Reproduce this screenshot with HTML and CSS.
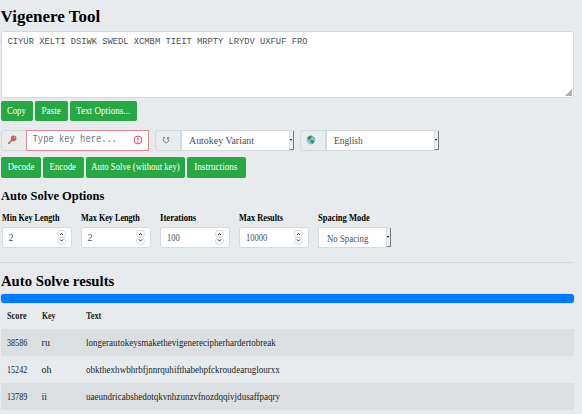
FILE: index.html
```html
<!DOCTYPE html>
<html lang="en">
<head>
<meta charset="utf-8">
<title>Vigenere Tool</title>
<link rel="stylesheet" href="styles.css">
</head>
<body>
<main class="page">
  <h1 class="title">Vigenere Tool</h1>
  <div class="cipher">CIYUR XELTI DSIWK SWEDL XCMBM TIEIT MRPTY LRYDV UXFUF FRO
    <svg class="grip" viewBox="0 0 7 7"><path d="M7 0V7H0Z" fill="#b9b9b9"/><path d="M1 7L7 1M4 7L7 4" stroke="#8e8e8e" stroke-width=".6"/></svg>
  </div>
  <div class="buttons text-buttons">
    <button class="btn w-copy"><span class="fit t-copy">Copy</span></button>
    <button class="btn w-paste"><span class="fit t-paste">Paste</span></button>
    <button class="btn w-options"><span class="fit t-options">Text Options...</span></button>
  </div>
  <div class="settings">
    <div class="group key-group">
      <span class="addon"><svg class="icon" viewBox="0 0 10 10"><path d="M5.2 4.8L1.3 8.7" stroke="#b55b45" stroke-width="1.5"/><path d="M2.2 7.8L3.3 8.9" stroke="#b55b45" stroke-width="1"/><circle cx="6.6" cy="3.4" r="2.8" fill="#c1694f"/><circle cx="7.6" cy="2.4" r=".6" fill="#e8d0c9"/></svg></span>
      <span class="key-input"><span class="placeholder">Type key here...</span><svg class="alert" viewBox="0 0 10 10"><circle cx="5" cy="5" r="3.9" fill="none" stroke="#dc3545" stroke-width=".9"/><path d="M5 2.5V5.5M5 6.4V7.5" stroke="#dc3545" stroke-width="1.1"/></svg></span>
    </div>
    <div class="group">
      <span class="addon"><svg class="icon" viewBox="0 0 10 10"><path d="M3.6 2.7A2.7 2.7 0 1 0 6.7 2.8" fill="none" stroke="#68717a" stroke-width=".85"/><path d="M2 2.5H3.9M6.5 4.6V2.5H8.5" fill="none" stroke="#68717a" stroke-width=".75"/></svg></span>
      <span class="select"><span class="fit t-autokey">Autokey Variant</span><i class="arrow"></i></span>
    </div>
    <div class="group">
      <span class="addon"><svg class="icon" viewBox="0 0 10 10"><circle cx="5" cy="5" r="4.4" fill="#82c5f4"/><path d="M1.2 2.8Q3 .3 5.7.7L6.2 1.8 5 2.5 5.5 3.4 4 4.2 3.2 5 2 4.2ZM4.5 5L7.5 5.2 8.2 6.6 6.4 9 5.5 8.5 5.3 6.9 4.2 6.2ZM7.2 1.5L9 3.6 7.7 3.4Z" fill="#498b36"/></svg></span>
      <span class="select"><span class="fit t-english">English</span><i class="arrow"></i></span>
    </div>
  </div>
  <div class="buttons action-buttons">
    <button class="btn w-decode"><span class="fit t-decode">Decode</span></button>
    <button class="btn w-encode"><span class="fit t-encode">Encode</span></button>
    <button class="btn w-auto"><span class="fit t-auto">Auto Solve (without key)</span></button>
    <button class="btn w-instructions"><span class="fit t-instructions">Instructions</span></button>
  </div>
  <h2 class="subtitle"><span class="fit t-solve">Auto Solve Options</span></h2>
  <div class="options">
    <label class="field"><b class="fit t-min">Min Key Length</b><span class="number"><span>2</span><svg class="spin" viewBox="0 0 9 15"><rect x=".5" y=".5" width="8" height="7" rx="3.4"/><rect x=".5" y="7.5" width="8" height="7" rx="3.4"/><path d="M3 5L4.5 3.5 6 5M3 9.5L4.5 11 6 9.5"/></svg></span></label>
    <label class="field"><b class="fit t-max">Max Key Length</b><span class="number"><span>2</span><svg class="spin" viewBox="0 0 9 15"><rect x=".5" y=".5" width="8" height="7" rx="3.4"/><rect x=".5" y="7.5" width="8" height="7" rx="3.4"/><path d="M3 5L4.5 3.5 6 5M3 9.5L4.5 11 6 9.5"/></svg></span></label>
    <label class="field"><b class="fit t-iterations">Iterations</b><span class="number"><span class="fit t-value">100</span><svg class="spin" viewBox="0 0 9 15"><rect x=".5" y=".5" width="8" height="7" rx="3.4"/><rect x=".5" y="7.5" width="8" height="7" rx="3.4"/><path d="M3 5L4.5 3.5 6 5M3 9.5L4.5 11 6 9.5"/></svg></span></label>
    <label class="field"><b class="fit t-results">Max Results</b><span class="number"><span class="fit t-value">10000</span><svg class="spin" viewBox="0 0 9 15"><rect x=".5" y=".5" width="8" height="7" rx="3.4"/><rect x=".5" y="7.5" width="8" height="7" rx="3.4"/><path d="M3 5L4.5 3.5 6 5M3 9.5L4.5 11 6 9.5"/></svg></span></label>
    <label class="field"><b class="fit t-mode">Spacing Mode</b><span class="select spacing"><span class="fit t-nospacing">No Spacing</span><i class="arrow"></i></span></label>
  </div>
  <hr class="rule">
  <h2 class="results-title"><span class="fit t-found">Auto Solve results</span></h2>
  <div class="progress"></div>
  <div class="table">
    <div class="row head"><span class="fit t-head">Score</span><span class="fit t-keyhead">Key</span><span class="fit t-head">Text</span></div>
    <div class="row odd"><span class="fit t-score">38586</span><span>ru</span><span class="fit t-row">longerautokeysmakethevigenerecipherhardertobreak</span></div>
    <div class="row"><span class="fit t-score">15242</span><span>oh</span><span class="fit t-row">obkthexhwbhrbfjnnrquhifthabehpfckroudearuglourxx</span></div>
    <div class="row odd"><span class="fit t-score">13789</span><span>ii</span><span class="fit t-row">uaeundricabshedotqkvnhzunzvfnozdqqivjdusaffpaqry</span></div>
  </div>
</main>
</body>
</html>
```
FILE: styles.css
```css
* { box-sizing: border-box; }
html, body { margin: 0; height: 414px; overflow: hidden; }
body { background: #e7ebee; color: #212529; font: 10px/12px "Liberation Serif", serif; }
.page { width: 573px; margin-left: .6px; }
h1, h2 { margin: 0; color: #000; font-weight: bold; white-space: nowrap; }
.title { height: 30.5px; padding-top: 6px; font-size: 17px; line-height: 21px; }
.cipher { position: relative; height: 67.5px; padding: 4px 6px; background: #fff; border: 1px solid #d5dade; border-radius: 3px; color: #495057; font: 8.77px/12px "Liberation Mono", monospace; white-space: nowrap; }
.grip { position: absolute; right: 1px; bottom: 1px; width: 7px; height: 7px; }
.buttons { display: flex; gap: 2px; height: 21px; }
.text-buttons { margin-top: 2.5px; }
.action-buttons { margin-top: 6.5px; }
.btn { display: flex; justify-content: center; flex: none; height: 20.6px; padding: 0; border: 0; border-radius: 2px; background: #28a745; color: #fff; font: 10.5px/20px "Liberation Serif", serif; white-space: nowrap; }
.w-copy { width: 32px; } .w-paste { width: 33px; } .w-options { width: 67px; }
.w-decode { width: 40px; } .w-encode { width: 41px; } .w-auto { width: 99px; } .w-instructions { width: 59px; }

/* Condensed text, scaled from its leading edge */
.fit { display: inline-block; flex: none; transform-origin: left center; }
.btn .fit { transform-origin: center; }
.t-copy { transform: scaleX(.83); }
.t-paste { transform: scaleX(.87); }
.t-options { transform: scaleX(.87); }
.t-decode { transform: scaleX(.83); }
.t-encode { transform: scaleX(.84); }
.t-auto { transform: scaleX(.825); }
.t-instructions { transform: scaleX(.87); }
.t-autokey { transform: scaleX(.9); }
.t-english { transform: scaleX(.85); }
.t-solve { transform: scaleX(.925); }
.t-min, .t-max { transform: scaleX(.815); }
.t-iterations { transform: scaleX(.87); }
.t-results { transform: scaleX(.83); }
.t-mode { transform: scaleX(.85); }
.t-nospacing { transform: scaleX(.8); }
.t-value { transform: scaleX(.85); }
.t-found { transform: scaleX(.98); }
.t-head { transform: scaleX(.83); }
.t-keyhead { transform: scaleX(.78); }
.t-score { transform: scaleX(.81); }
.t-row { transform: scaleX(.904); }

.settings { display: flex; gap: 6px; height: 21px; margin-top: 8px; }
.group { display: flex; width: 139px; height: 21px; }
.key-group { width: 148px; }
.addon { display: flex; align-items: center; justify-content: center; width: 26px; height: 21px; padding-right: 3px; border: 1px solid #d3d9de; border-radius: 3px 0 0 3px; background: #e9ecef; }
.icon { width: 10px; height: 10px; }
.key-input { display: flex; flex: 1; align-items: center; justify-content: space-between; margin-left: -1px; padding: 0 5px 0 6px; background: #fff; border: 1px solid #e28b96; color: #6c757d; font: 8.8px/19px "Liberation Mono", monospace; white-space: nowrap; }
.placeholder { padding-top: 1px; transform: scaleY(1.15); }
.alert { width: 10px; height: 10px; }
.select { display: flex; flex: 1; align-items: center; justify-content: space-between; height: 21px; padding-left: 7px; background: #fff; border: 1px solid #d5dade; border-right: 0; border-radius: 0 2px 2px 0; color: #495057; font-size: 11px; white-space: nowrap; }
.arrow { display: flex; flex: none; align-items: center; justify-content: center; width: 5px; height: 19px; background: #eee; border-right: 1px solid #777; border-bottom: 1px solid #888; border-left: 1px solid #ddd; }
.arrow::after { content: ""; border: 1.5px solid transparent; border-top: 2px solid #000; border-bottom: 0; }
.subtitle { height: 33px; padding-top: 8px; font-size: 13.5px; line-height: 19px; }
.options { display: flex; gap: 9px; height: 38px; margin-left: 1px; }
.field { display: flex; flex-direction: column; width: 70px; color: #000; white-space: nowrap; }
.field b { height: 16px; padding-top: 1px; align-self: flex-start; }
.number { display: flex; align-items: center; justify-content: space-between; height: 21px; padding: 0 5px 0 6px; border: 1px solid #d5dade; border-radius: 3px; background: #fff; color: #495057; }
.spin { width: 9px; height: 15px; fill: #fff; stroke: #c8c8c8; stroke-width: .7; }
.spin path { fill: none; stroke: #222; stroke-width: 1; }
.spacing { flex: none; width: 73px; padding-left: 8px; }
.rule { height: 1px; margin: 13px 0 0; border: 0; background: #d4d8db; }
.results-title { height: 30.5px; padding-top: 7px; font-size: 15px; line-height: 22px; }
.progress { height: 9px; border-radius: 3px; background: #007bff; box-shadow: 0 0 0 .5px #b3d1ef; }
.table { margin-top: .5px; }
.row { display: grid; grid-template-columns: 35px 44px 1fr; height: 27px; padding-left: 6px; line-height: 28px; white-space: nowrap; }
.row span { justify-self: start; }
.head { height: 26px; line-height: 26px; font-weight: bold; }
.odd { background: #dbdfe2; }
```
